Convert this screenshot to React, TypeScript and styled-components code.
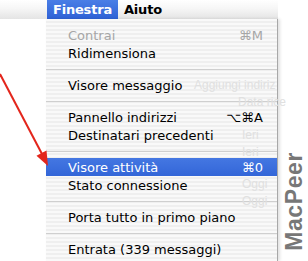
import React from "react";
import styled, { createGlobalStyle } from "styled-components";

const Global = createGlobalStyle`
  html, body { margin: 0; padding: 0; background: #ffffff; }
  body { font-family: "DejaVu Sans", "Liberation Sans", sans-serif; }
`;

const Stage = styled.div`
  position: relative;
  width: 308px;
  height: 261px;
  overflow: hidden;
  background: #ffffff;
  display: flex;
  flex-direction: column;
`;

const MenuBar = styled.div`
  width: 278px;
  height: 19px;
  flex: none;
  display: flex;
  align-items: stretch;
  padding-left: 47px;
  box-sizing: border-box;
  background: linear-gradient(#ffffff 0%, #f6f6f6 45%, #e4e4e4 100%);
`;

const MenuTitle = styled.div<{ $active?: boolean }>`
  display: flex;
  align-items: center;
  padding: 0 6px 0 6px;
  font-size: 13px;
  font-weight: bold;
  letter-spacing: -0.2px;
  color: ${(p) => (p.$active ? "#ffffff" : "#000000")};
  background: ${(p) => (p.$active ? "linear-gradient(#4a7ee6, #2f62d6)" : "transparent")};
  width: ${(p) => (p.$active ? "71px" : "auto")};
  box-sizing: border-box;
  justify-content: ${(p) => (p.$active ? "center" : "flex-start")};
`;

const Body = styled.div`
  flex: 1;
  display: flex;
  align-items: stretch;
`;

const Gutter = styled.div`
  width: 46px;
  flex: none;
`;

const Dropdown = styled.div`
  position: relative;
  width: 232px;
  flex: none;
  box-sizing: border-box;
  padding-top: 7px;
  border-right: 1px solid #a8a8a8;
  box-shadow: 2px 0 3px rgba(0, 0, 0, 0.12);
  background: repeating-linear-gradient(#f9f9f9 0px, #f9f9f9 2px, #efefef 2px, #efefef 4px);
  display: flex;
  flex-direction: column;
`;

const Ghost = styled.span<{ $x: number; $y: number }>`
  position: absolute;
  left: ${(p) => p.$x}px;
  top: ${(p) => p.$y}px;
  font-family: "Liberation Sans", sans-serif;
  font-size: 12px;
  color: #e0e0e0;
  white-space: nowrap;
  pointer-events: none;
`;

const Item = styled.div<{ $selected?: boolean; $disabled?: boolean }>`
  position: relative;
  height: 18px;
  flex: none;
  display: flex;
  align-items: center;
  justify-content: space-between;
  padding: 0 14px 0 22px;
  font-size: 13px;
  white-space: nowrap;
  color: ${(p) => (p.$selected ? "#ffffff" : p.$disabled ? "#a6a6a6" : "#000000")};
  background: ${(p) => (p.$selected ? "linear-gradient(#4477e2, #3366d8)" : "transparent")};
`;

const Shortcut = styled.span`
  font-size: 13px;
`;

const Separator = styled.div`
  height: 14px;
  flex: none;
  display: flex;
  align-items: center;
  &::after {
    content: "";
    display: block;
    width: 100%;
    height: 1px;
    background: #cfcfcf;
  }
`;

const Watermark = styled.div`
  flex: none;
  align-self: flex-end;
  margin: 0 0 10px 6px;
  writing-mode: vertical-rl;
  transform: rotate(180deg);
  font-family: "Liberation Sans", Arial, sans-serif;
  font-weight: bold;
  font-size: 23px;
  line-height: 20px;
  letter-spacing: 0.6px;
  color: #777777;
`;

const ArrowLayer = styled.svg`
  position: absolute;
  left: 0;
  top: 0;
  width: 60px;
  height: 180px;
  pointer-events: none;
`;

type Entry =
  | { kind: "sep" }
  | { kind: "item"; label: string; key?: string; selected?: boolean; disabled?: boolean };

const entries: Entry[] = [
  { kind: "item", label: "Contrai", key: "⌘M", disabled: true },
  { kind: "item", label: "Ridimensiona" },
  { kind: "sep" },
  { kind: "item", label: "Visore messaggio" },
  { kind: "sep" },
  { kind: "item", label: "Pannello indirizzi", key: "⌥⌘A" },
  { kind: "item", label: "Destinatari precedenti" },
  { kind: "sep" },
  { kind: "item", label: "Visore attività", key: "⌘0", selected: true },
  { kind: "item", label: "Stato connessione" },
  { kind: "sep" },
  { kind: "item", label: "Porta tutto in primo piano" },
  { kind: "sep" },
  { kind: "item", label: "Entrata (339 messaggi)" },
];

const ghosts: { x: number; y: number; t: string }[] = [
  { x: 148, y: 59, t: "Aggiungi indiriz" },
  { x: 192, y: 76, t: "Data rice" },
  { x: 196, y: 109, t: "Ieri" },
  { x: 196, y: 126, t: "Ieri" },
  { x: 196, y: 158, t: "Oggi" },
  { x: 196, y: 175, t: "Oggi" },
];

export default function App() {
  return (
    <>
      <Global />
      <Stage>
        <MenuBar>
          <MenuTitle $active>Finestra</MenuTitle>
          <MenuTitle>Aiuto</MenuTitle>
        </MenuBar>
        <Body>
          <Gutter />
          <Dropdown>
            {ghosts.map((g, i) => (
              <Ghost key={i} $x={g.x} $y={g.y}>
                {g.t}
              </Ghost>
            ))}
            {entries.map((e, i) =>
              e.kind === "sep" ? (
                <Separator key={i} />
              ) : (
                <Item key={i} $selected={e.selected} $disabled={e.disabled}>
                  <span>{e.label}</span>
                  {e.key && <Shortcut>{e.key}</Shortcut>}
                </Item>
              )
            )}
          </Dropdown>
          <Watermark>MacPeer</Watermark>
        </Body>
        <ArrowLayer viewBox="0 0 60 180">
          <line x1="0" y1="74" x2="42" y2="154" stroke="#e3261c" strokeWidth="2" />
          <polygon points="48,166 46.5,150.5 36.5,155.8" fill="#e3261c" />
        </ArrowLayer>
      </Stage>
    </>
  );
}
